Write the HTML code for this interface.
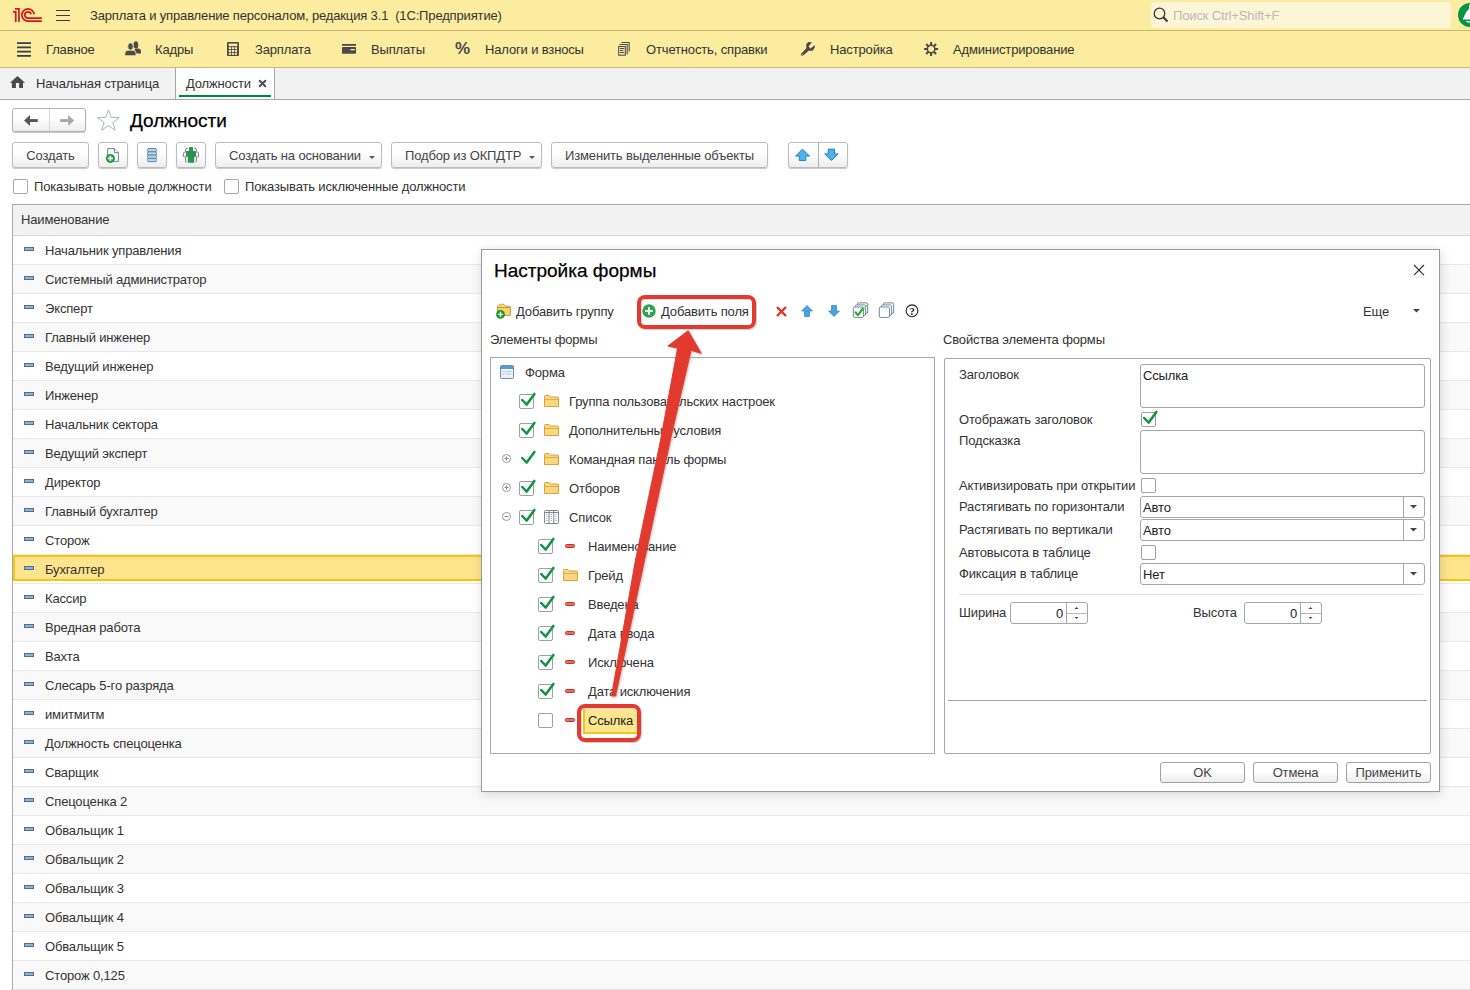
<!DOCTYPE html><html><head><meta charset="utf-8"><style>
*{box-sizing:border-box;margin:0;padding:0}
html,body{width:1470px;height:990px;overflow:hidden;background:#fff}
body{font-family:"Liberation Sans",sans-serif;font-size:13px;color:#333;position:relative;line-height:15px;letter-spacing:-0.15px}
.a{position:absolute;white-space:nowrap}
svg{position:absolute;overflow:visible}
#hdr{position:absolute;left:0;top:0;width:1470px;height:31px;background:#fbeca0;border-bottom:1px solid #c8b86e}
#menu{position:absolute;left:0;top:31px;width:1470px;height:37px;background:#fbeca0;border-bottom:1px solid #cbbb72}
#tabs{position:absolute;left:0;top:68px;width:1470px;height:32px;background:#f2f2f2;border-bottom:1px solid #a8a8a8}
.btn{position:absolute;height:26px;border:1px solid #bcbcbc;border-radius:3px;background:linear-gradient(#fff 40%,#ededed);box-shadow:0 1px 1px rgba(0,0,0,.22);text-align:center;line-height:25px;color:#444}
.cb{position:absolute;width:15px;height:15px;border:1px solid #a8a8a8;border-radius:2px;background:#fff}
.row{position:absolute;left:13px;width:1457px;height:29px;border-bottom:1px solid #e8e8e8}
.row.g{background:#f9f9f9}
.row .ic{position:absolute;left:11px;top:11px;width:10px;height:4px;background:#8db4d8;border:1px solid #4f6f8c}
.row .t{position:absolute;left:32px;top:7px}
</style></head><body>
<div id="hdr">
<svg style="left:0;top:0" width="50" height="30" viewBox="0 0 50 30">
<g fill="none" stroke="#d9141b" stroke-width="1.7">
<path d="M12.9 11.85 H15.75 V21.9 M14.9 8.9 H18.95 V21.9"/>
<path d="M34.1 14.4 A6.1 6.1 0 1 0 28 21.1 H41.8"/>
<path d="M31.1 14.4 A3.15 3.15 0 1 0 28 18.15 H41.8"/>
</g></svg>
<svg style="left:56px;top:9px" width="14" height="12"><path d="M0 1.5H14M0 6.5H14M0 11.5H14" stroke="#3b3b3b" stroke-width="1.2"/></svg>
<div class="a" style="left:90px;top:8px">Зарплата и управление персоналом, редакция 3.1&nbsp; (1С:Предприятие)</div>
<div class="a" style="left:1151px;top:2px;width:300px;height:26px;background:#fdf6d6;border-radius:3px"></div>
<svg style="left:1153px;top:7px" width="16" height="16"><circle cx="6.5" cy="6.5" r="5.3" fill="none" stroke="#333" stroke-width="1.3"/><path d="M10.5 10.5 L14.5 14.5" stroke="#333" stroke-width="2"/></svg>
<div class="a" style="left:1173px;top:8px;color:#b9b9b9">Поиск Ctrl+Shift+F</div>
<svg style="left:0;top:0" width="1470" height="30"><circle cx="1470" cy="14.9" r="12" fill="#069544"/><path d="M1462.8 19.6 Q1464.6 14.5 1467 11 L1468.8 9.5 L1469.3 4.6 H1472 V19.6Z" fill="#fff"/><path d="M1466.5 21.2 Q1469 22.4 1472 22" stroke="#fff" stroke-width="1.2" fill="none"/></svg>
</div>
<div id="menu">
<div class="a" style="left:46px;top:11px">Главное</div>
<div class="a" style="left:155px;top:11px">Кадры</div>
<div class="a" style="left:255px;top:11px">Зарплата</div>
<div class="a" style="left:371px;top:11px">Выплаты</div>
<div class="a" style="left:485px;top:11px">Налоги и взносы</div>
<div class="a" style="left:646px;top:11px">Отчетность, справки</div>
<div class="a" style="left:830px;top:11px">Настройка</div>
<div class="a" style="left:953px;top:11px">Администрирование</div>
<div class="a" style="left:455px;top:9px;font-size:17px;line-height:17px;font-weight:bold;color:#4a4a4a">%</div>
</div>
<svg style="left:0;top:0" width="1470" height="100"><path d="M17 43.2H31M17 47.4H31M17 51.6H31M17 55.8H31" stroke="#3d3d48" stroke-width="1.7"/><ellipse cx="135.9" cy="44.9" rx="2.4" ry="3.7" fill="#4a4a4a"/><path d="M134.3 53.6 V50.8 Q134.6 48.7 137 48.6 H138.5 Q141 48.8 141 51 V53.6Z" fill="#4a4a4a"/><ellipse cx="130.5" cy="46.6" rx="2.8" ry="3.8" fill="#4a4a4a" stroke="#fbeca0" stroke-width="0.9"/><path d="M124.8 55.8 V53 Q125 50.4 128 50.2 H133 Q136 50.4 136 53 V55.8Z" fill="#4a4a4a" stroke="#fbeca0" stroke-width="0.9"/><rect x="227" y="42" width="12" height="14" rx="1" fill="#4a4a4a"/><rect x="228.6" y="43.6" width="8.8" height="2.6" fill="#fbeca0"/><rect x="228.8" y="47.2" width="2.2" height="2" fill="#fbeca0"/><rect x="228.8" y="50.0" width="2.2" height="2" fill="#fbeca0"/><rect x="228.8" y="52.8" width="2.2" height="2" fill="#fbeca0"/><rect x="231.8" y="47.2" width="2.2" height="2" fill="#fbeca0"/><rect x="231.8" y="50.0" width="2.2" height="2" fill="#fbeca0"/><rect x="231.8" y="52.8" width="2.2" height="2" fill="#fbeca0"/><rect x="234.8" y="47.2" width="2.2" height="2" fill="#fbeca0"/><rect x="234.8" y="50.0" width="2.2" height="2" fill="#fbeca0"/><rect x="234.8" y="52.8" width="2.2" height="2" fill="#fbeca0"/><rect x="342" y="44" width="14" height="1.8" fill="#4a4a4a"/><rect x="342" y="47" width="14" height="6.8" rx="0.8" fill="#4a4a4a"/><rect x="350.6" y="49" width="4.2" height="1.3" fill="#fbeca0"/><g fill="none" stroke="#4a4a4a" stroke-width="1.05"><rect x="618.7" y="46.5" width="6.6" height="8.7"/><path d="M619.5 44.4H627.2V54.4M621.5 42.4H629.2V51.6"/><path d="M620.3 48.5H623.8M620.3 50.5H622.9M620.3 52.5H623.8" stroke-linecap="round"/></g><path d="M806.2 44.3 L808.3 42.1 L811.9 42.2 L808.6 46.4 L810.5 48.5 L814.5 45.2 L815 47 L812.7 50.7 L808.6 50.8 L803.2 55.6 Q801.5 56.2 800.7 54.2 L806.3 48.3Z" fill="#4a4a4a"/><circle cx="802.6" cy="54.5" r="0.6" fill="#fbeca0"/><g transform="translate(931.1 49)"><circle r="3.75" fill="none" stroke="#4a4a4a" stroke-width="1.5"/><rect x="-1" y="-7" width="2" height="3.4" fill="#4a4a4a" transform="rotate(0)"/><rect x="-1" y="-7" width="2" height="3.4" fill="#4a4a4a" transform="rotate(45)"/><rect x="-1" y="-7" width="2" height="3.4" fill="#4a4a4a" transform="rotate(90)"/><rect x="-1" y="-7" width="2" height="3.4" fill="#4a4a4a" transform="rotate(135)"/><rect x="-1" y="-7" width="2" height="3.4" fill="#4a4a4a" transform="rotate(180)"/><rect x="-1" y="-7" width="2" height="3.4" fill="#4a4a4a" transform="rotate(225)"/><rect x="-1" y="-7" width="2" height="3.4" fill="#4a4a4a" transform="rotate(270)"/><rect x="-1" y="-7" width="2" height="3.4" fill="#4a4a4a" transform="rotate(315)"/></g></svg>
<div id="tabs"></div>
<div class="a" style="left:175px;top:68px;width:100px;height:31px;background:#fff;border-left:1px solid #a8a8a8;border-right:1px solid #a8a8a8"></div>
<svg style="left:0;top:0" width="300" height="100"><path d="M17.5 76 L25 82.7 H23 V88 H19.1 V83 H15.9 V88 H11.9 V82.7 H10Z" fill="#4a4a4a"/><path d="M259.7 80.7L265.3 86.3M265.3 80.7L259.7 86.3" stroke="#4d4d4d" stroke-width="2" stroke-linecap="round"/><rect x="179" y="95" width="92" height="2" fill="#00893a"/></svg>
<div class="a" style="left:36px;top:76px">Начальная страница</div>
<div class="a" style="left:186px;top:76px">Должности</div>
<div class="btn" style="left:12px;top:108px;width:74px;height:24px;border-color:#b0b0b0"></div>
<div class="a" style="left:49px;top:109px;width:1px;height:22px;background:#d9d9d9"></div>
<svg style="left:0;top:0" width="130" height="140"><path d="M24 120.5 L30 115 V126Z" fill="#555"/><rect x="29.5" y="119.1" width="8.3" height="2.9" fill="#555"/><path d="M74.1 120.5 L68.1 115 V126Z" fill="#a6a6a6"/><rect x="60.2" y="119.1" width="8.4" height="2.9" fill="#a6a6a6"/><path d="M108.4 109.8 L111.1 117.4 L119.3 117.6 L112.8 122.5 L115.2 130.2 L108.4 125.6 L101.6 130.2 L104 122.5 L97.5 117.6 L105.7 117.4Z" fill="none" stroke="#aab4be" stroke-width="1"/></svg>
<div class="a" style="left:130px;top:110px;font-size:19px;line-height:22px;color:#000;-webkit-text-stroke:0.25px #000;letter-spacing:0">Должности</div>
<div class="btn" style="left:12px;top:142px;width:77px">Создать</div>
<div class="btn" style="left:98px;top:142px;width:30px"></div>
<div class="btn" style="left:137px;top:142px;width:30px"></div>
<div class="btn" style="left:176px;top:142px;width:30px"></div>
<svg style="left:0;top:0" width="210" height="170"><path d="M107.6 148.6H114.4L118.4 152.6V161.4H107.6Z" fill="#fff" stroke="#6e8296" stroke-width="1"/><path d="M114.4 148.6V152.6H118.4" fill="#fff" stroke="#6e8296" stroke-width="1"/><circle cx="110.4" cy="158.4" r="4.5" fill="#1d9a3a"/><path d="M110.4 155.8V161M107.8 158.4H113" stroke="#fff" stroke-width="1.6"/><rect x="147.5" y="148.5" width="9" height="3.3" rx="1.2" fill="#b9d3ea" stroke="#5e86aa" stroke-width="1"/><rect x="147.5" y="151.8" width="9" height="3.3" rx="1.2" fill="#b9d3ea" stroke="#5e86aa" stroke-width="1"/><rect x="147.5" y="155.1" width="9" height="3.3" rx="1.2" fill="#b9d3ea" stroke="#5e86aa" stroke-width="1"/><rect x="147.5" y="158.4" width="9" height="3.3" rx="1.2" fill="#b9d3ea" stroke="#5e86aa" stroke-width="1"/><g fill="none" stroke="#7a7a7a" stroke-width="1"><path d="M187.8 148.4H187.1Q185.6 148.4 185.6 150V151.3M186.2 152H184.9Q183.4 152 183.4 153.6V156.2Q183.4 156.8 184.2 156.8H185.6M185.6 157V161.6Q185.6 162.2 186.4 162.2"/><path d="M194.2 148.4H194.9Q196.4 148.4 196.4 150V151.3M195.8 152H197.1Q198.6 152 198.6 153.6V156.2Q198.6 156.8 197.8 156.8H196.4M196.4 157V161.6Q196.4 162.2 195.6 162.2"/></g><path d="M189 147.6Q189 147 189.6 147H192.4Q193 147 193 147.6V150.9H195.4Q196 150.9 196 151.5V156.7H194.2V162.3Q194.2 162.8 193.6 162.8H188.4Q187.8 162.8 187.8 162.3V156.7H186V151.5Q186 150.9 186.6 150.9H189Z" fill="#2a9350"/></svg>
<div class="btn" style="left:215px;top:142px;width:167px;text-align:left;padding-left:13px">Создать на основании</div>
<svg style="left:369px;top:156px" width="6" height="3"><path d="M0 0H6L3 3Z" fill="#555"/></svg>
<div class="btn" style="left:391px;top:142px;width:151px;text-align:left;padding-left:13px">Подбор из ОКПДТР</div>
<svg style="left:529px;top:156px" width="6" height="3"><path d="M0 0H6L3 3Z" fill="#555"/></svg>
<div class="btn" style="left:551px;top:142px;width:217px">Изменить выделенные объекты</div>
<div class="btn" style="left:788px;top:142px;width:60px"></div>
<div class="a" style="left:818px;top:143px;width:1px;height:24px;background:#b0b0b0"></div>
<svg style="left:0;top:0" width="860" height="170"><path d="M802.5 149.1L809.5 156.1H805.8V160.5H799.3V156.1H795.6Z" fill="#4bb3ee" stroke="#1f78b4" stroke-width="0.9" stroke-linejoin="round"/><path d="M831.5 160.5L838.2 153.9H834.5V149.1H828.2V153.9H824.7Z" fill="#4bb3ee" stroke="#1f78b4" stroke-width="0.9" stroke-linejoin="round"/></svg>
<div class="cb" style="left:13px;top:179px"></div>
<div class="a" style="left:34px;top:179px">Показывать новые должности</div>
<div class="cb" style="left:224px;top:179px"></div>
<div class="a" style="left:245px;top:179px">Показывать исключенные должности</div>
<div class="a" style="left:12px;top:204px;width:1458px;height:786px;border-left:1px solid #a8a8a8;border-top:1px solid #a8a8a8"></div>
<div class="a" style="left:13px;top:205px;width:1457px;height:31px;background:#f2f2f2;border-bottom:1px solid #d9d9d9"></div>
<div class="a" style="left:21px;top:212px">Наименование</div>
<div class="row" style="top:236px"><div class="ic"></div><div class="t">Начальник управления</div></div>
<div class="row g" style="top:265px"><div class="ic"></div><div class="t">Системный администратор</div></div>
<div class="row" style="top:294px"><div class="ic"></div><div class="t">Эксперт</div></div>
<div class="row g" style="top:323px"><div class="ic"></div><div class="t">Главный инженер</div></div>
<div class="row" style="top:352px"><div class="ic"></div><div class="t">Ведущий инженер</div></div>
<div class="row g" style="top:381px"><div class="ic"></div><div class="t">Инженер</div></div>
<div class="row" style="top:410px"><div class="ic"></div><div class="t">Начальник сектора</div></div>
<div class="row g" style="top:439px"><div class="ic"></div><div class="t">Ведущий эксперт</div></div>
<div class="row" style="top:468px"><div class="ic"></div><div class="t">Директор</div></div>
<div class="row g" style="top:497px"><div class="ic"></div><div class="t">Главный бухгалтер</div></div>
<div class="row" style="top:526px"><div class="ic"></div><div class="t">Сторож</div></div>
<div class="row" style="top:555px"><div class="a" style="left:0;top:0;width:1457px;height:26px;border:2px solid #f6c414;border-right:none;background:#fde48d"></div><div class="ic"></div><div class="t">Бухгалтер</div></div>
<div class="row" style="top:584px"><div class="ic"></div><div class="t">Кассир</div></div>
<div class="row g" style="top:613px"><div class="ic"></div><div class="t">Вредная работа</div></div>
<div class="row" style="top:642px"><div class="ic"></div><div class="t">Вахта</div></div>
<div class="row g" style="top:671px"><div class="ic"></div><div class="t">Слесарь 5-го разряда</div></div>
<div class="row" style="top:700px"><div class="ic"></div><div class="t">имитмитм</div></div>
<div class="row g" style="top:729px"><div class="ic"></div><div class="t">Должность спецоценка</div></div>
<div class="row" style="top:758px"><div class="ic"></div><div class="t">Сварщик</div></div>
<div class="row g" style="top:787px"><div class="ic"></div><div class="t">Спецоценка 2</div></div>
<div class="row" style="top:816px"><div class="ic"></div><div class="t">Обвальщик 1</div></div>
<div class="row g" style="top:845px"><div class="ic"></div><div class="t">Обвальщик 2</div></div>
<div class="row" style="top:874px"><div class="ic"></div><div class="t">Обвальщик 3</div></div>
<div class="row g" style="top:903px"><div class="ic"></div><div class="t">Обвальщик 4</div></div>
<div class="row" style="top:932px"><div class="ic"></div><div class="t">Обвальщик 5</div></div>
<div class="row g" style="top:961px"><div class="ic"></div><div class="t">Сторож 0,125</div></div>
<div class="a" style="left:481px;top:249px;width:959px;height:543px;background:#fff;border:1px solid #9a9a9a;box-shadow:1px 2px 10px rgba(0,0,0,.14)"></div>
<div class="a" style="left:494px;top:260px;font-size:19px;line-height:22px;color:#000;-webkit-text-stroke:0.25px #000;letter-spacing:0">Настройка формы</div>
<svg style="left:1413px;top:264px" width="12" height="12"><path d="M1 1L11 11.2M11 1L1 11.2" stroke="#333" stroke-width="1.2"/></svg>
<svg style="left:0;top:0" width="930" height="330"><path d="M497.6 315.4V306.2L499.6 304.3H503.8L505.4 306.2H509.6Q510.4 306.2 510.4 307V315.4Z" fill="#f7d46e" stroke="#cb8b35" stroke-width="0.9"/><path d="M497.8 307.6H510.2" stroke="#cb8b35" stroke-width="0.9"/><path d="M498.3 305.3L499.8 304.8H503.5L504.5 306.4" fill="#fde35a"/><circle cx="500.5" cy="314.4" r="4.4" fill="#17992a"/><path d="M500.5 311.8V317M497.9 314.4H503.1" stroke="#fff" stroke-width="1.4"/></svg>
<div class="a" style="left:516px;top:304px">Добавить группу</div>
<svg style="left:642px;top:304px" width="14" height="14" viewBox="0 0 14 14"><circle cx="7" cy="7" r="6.7" fill="#2aa552"/><path d="M7 3.2V10.8M3.2 7H10.8" stroke="#fff" stroke-width="2"/></svg>
<div class="a" style="left:661px;top:304px">Добавить поля</div>
<svg style="left:776px;top:306px" width="11" height="11"><path d="M1 1L10 10M10 1L1 10" stroke="#e0312b" stroke-width="2.4"/></svg>
<svg style="left:801px;top:305px" width="12" height="12" viewBox="0 0 12 12"><path d="M6 0.5 L11.5 6 H8.5 V11.5 H3.5 V6 H0.5Z" fill="#4aa3e0" stroke="#2f86c6" stroke-width="0.7"/></svg>
<svg style="left:828px;top:305px" width="12" height="12" viewBox="0 0 12 12"><path d="M6 11.5 L11.5 6 H8.5 V0.5 H3.5 V6 H0.5Z" fill="#4aa3e0" stroke="#2f86c6" stroke-width="0.7"/></svg>
<svg style="left:0;top:0" width="930" height="330"><rect x="857.4" y="302.9" width="10.3" height="10.4" rx="1.3" fill="#fff" stroke="#5b7a95" stroke-width="0.9"/><rect x="855.3499999999999" y="304.95" width="10.3" height="10.4" rx="1.3" fill="#fff" stroke="#5b7a95" stroke-width="0.9"/><rect x="853.3" y="307" width="10.3" height="10.4" rx="1.3" fill="#fff" stroke="#5b7a95" stroke-width="0.9"/><path d="M855.5 312.3L858 315.2L862.6 309" fill="none" stroke="#3aa82a" stroke-width="2.2" stroke-linecap="round" stroke-linejoin="round"/><path d="M864.5 308.5L866.5 305.2M866.5 306.5L868 304" stroke="#7cc46a" stroke-width="1.2"/></svg>
<svg style="left:0;top:0" width="930" height="330"><rect x="883.4" y="302.9" width="10.3" height="10.4" rx="1.3" fill="#fff" stroke="#5b7a95" stroke-width="0.9"/><rect x="881.3499999999999" y="304.95" width="10.3" height="10.4" rx="1.3" fill="#fff" stroke="#5b7a95" stroke-width="0.9"/><rect x="879.3" y="307" width="10.3" height="10.4" rx="1.3" fill="#fff" stroke="#5b7a95" stroke-width="0.9"/></svg>
<svg style="left:0;top:0" width="930" height="330"><circle cx="912" cy="310.8" r="5.9" fill="#fff" stroke="#222" stroke-width="1.1"/><text x="912" y="314.6" font-family="Liberation Serif" font-weight="bold" font-size="10.5" text-anchor="middle" fill="#111">?</text></svg>
<div class="a" style="left:1363px;top:304px">Еще</div>
<svg style="left:1413px;top:309px" width="7" height="4"><path d="M0 0H7L3.5 3.5Z" fill="#444"/></svg>
<div class="a" style="left:490px;top:332px">Элементы формы</div>
<div class="a" style="left:943px;top:332px">Свойства элемента формы</div>
<div class="a" style="left:490px;top:357px;width:445px;height:397px;border:1px solid #a8a8a8;background:#fff"></div>
<svg style="left:500px;top:365px" width="14" height="14" viewBox="0 0 14 14"><rect x="0.5" y="0.5" width="13" height="13" rx="1" fill="#eef2f6" stroke="#6b8eb4"/><rect x="1" y="1" width="12" height="3" fill="#5b9bd5"/><path d="M2.5 6.5H5M6.5 6.5H11.5M2.5 9H5M6.5 9H11.5" stroke="#b4c2d0"/></svg>
<div class="a" style="left:525px;top:365px">Форма</div>
<div class="cb" style="left:519px;top:394px;border-color:#a0a0a0"></div><svg style="left:519px;top:387px" width="18" height="22" viewBox="0 0 18 22"><path d="M3.2 13 L7.7 17.6 L15.4 6.9" fill="none" stroke="#119442" stroke-width="2.5" stroke-linecap="round" stroke-linejoin="round"/></svg>
<svg style="left:544px;top:395px" width="15" height="12" viewBox="0 0 15 12"><path d="M0.5 1.5 Q0.5 0.5 1.5 0.5 H5 L6.5 2 H13.5 Q14.5 2 14.5 3 V11.5 H0.5Z" fill="#f9d77e" stroke="#d9a23a"/><path d="M1 4.5 H14" stroke="#e0ad48"/></svg>
<div class="a" style="left:569px;top:394px">Группа пользовательских настроек</div>
<div class="cb" style="left:519px;top:423px;border-color:#a0a0a0"></div><svg style="left:519px;top:416px" width="18" height="22" viewBox="0 0 18 22"><path d="M3.2 13 L7.7 17.6 L15.4 6.9" fill="none" stroke="#119442" stroke-width="2.5" stroke-linecap="round" stroke-linejoin="round"/></svg>
<svg style="left:544px;top:424px" width="15" height="12" viewBox="0 0 15 12"><path d="M0.5 1.5 Q0.5 0.5 1.5 0.5 H5 L6.5 2 H13.5 Q14.5 2 14.5 3 V11.5 H0.5Z" fill="#f9d77e" stroke="#d9a23a"/><path d="M1 4.5 H14" stroke="#e0ad48"/></svg>
<div class="a" style="left:569px;top:423px">Дополнительные условия</div>
<svg style="left:502px;top:454px" width="9" height="9" viewBox="0 0 9 9"><circle cx="4.5" cy="4.5" r="4" fill="#fff" stroke="#999" stroke-width="1"/><path d="M2.5 4.5H6.5M4.5 2.5V6.5" stroke="#888" stroke-width="1"/></svg>
<svg style="left:519px;top:445px" width="18" height="22" viewBox="0 0 18 22"><path d="M3.2 13 L7.7 17.6 L15.4 6.9" fill="none" stroke="#119442" stroke-width="2.5" stroke-linecap="round" stroke-linejoin="round"/></svg>
<svg style="left:544px;top:453px" width="15" height="12" viewBox="0 0 15 12"><path d="M0.5 1.5 Q0.5 0.5 1.5 0.5 H5 L6.5 2 H13.5 Q14.5 2 14.5 3 V11.5 H0.5Z" fill="#f9d77e" stroke="#d9a23a"/><path d="M1 4.5 H14" stroke="#e0ad48"/></svg>
<div class="a" style="left:569px;top:452px">Командная панель формы</div>
<svg style="left:502px;top:483px" width="9" height="9" viewBox="0 0 9 9"><circle cx="4.5" cy="4.5" r="4" fill="#fff" stroke="#999" stroke-width="1"/><path d="M2.5 4.5H6.5M4.5 2.5V6.5" stroke="#888" stroke-width="1"/></svg>
<div class="cb" style="left:519px;top:481px;border-color:#a0a0a0"></div><svg style="left:519px;top:474px" width="18" height="22" viewBox="0 0 18 22"><path d="M3.2 13 L7.7 17.6 L15.4 6.9" fill="none" stroke="#119442" stroke-width="2.5" stroke-linecap="round" stroke-linejoin="round"/></svg>
<svg style="left:544px;top:482px" width="15" height="12" viewBox="0 0 15 12"><path d="M0.5 1.5 Q0.5 0.5 1.5 0.5 H5 L6.5 2 H13.5 Q14.5 2 14.5 3 V11.5 H0.5Z" fill="#f9d77e" stroke="#d9a23a"/><path d="M1 4.5 H14" stroke="#e0ad48"/></svg>
<div class="a" style="left:569px;top:481px">Отборов</div>
<svg style="left:502px;top:512px" width="9" height="9" viewBox="0 0 9 9"><circle cx="4.5" cy="4.5" r="4" fill="#fff" stroke="#999" stroke-width="1"/><path d="M2.5 4.5H6.5" stroke="#888" stroke-width="1"/></svg>
<div class="cb" style="left:519px;top:510px;border-color:#a0a0a0"></div><svg style="left:519px;top:503px" width="18" height="22" viewBox="0 0 18 22"><path d="M3.2 13 L7.7 17.6 L15.4 6.9" fill="none" stroke="#119442" stroke-width="2.5" stroke-linecap="round" stroke-linejoin="round"/></svg>
<svg style="left:544px;top:510px" width="15" height="14" viewBox="0 0 15 14"><rect x="0.5" y="0.5" width="14" height="13" rx="1" fill="#fff" stroke="#7b8793"/><path d="M0.5 2.5H14.5M5 0.5V13.5M9.8 0.5V13.5" stroke="#7b8793" stroke-width="1"/><rect x="2.3" y="4" width="1" height="1" fill="#8d98a2"/><rect x="2.3" y="6" width="1" height="1" fill="#8d98a2"/><rect x="2.3" y="8" width="1" height="1" fill="#8d98a2"/><rect x="2.3" y="10" width="1" height="1" fill="#8d98a2"/><rect x="6.8" y="4" width="1" height="1" fill="#8d98a2"/><rect x="6.8" y="6" width="1" height="1" fill="#8d98a2"/><rect x="6.8" y="8" width="1" height="1" fill="#8d98a2"/><rect x="6.8" y="10" width="1" height="1" fill="#8d98a2"/><rect x="11.5" y="4" width="1" height="1" fill="#8d98a2"/><rect x="11.5" y="6" width="1" height="1" fill="#8d98a2"/><rect x="11.5" y="8" width="1" height="1" fill="#8d98a2"/><rect x="11.5" y="10" width="1" height="1" fill="#8d98a2"/></svg>
<div class="a" style="left:569px;top:510px">Список</div>
<div class="cb" style="left:538px;top:539px;border-color:#a0a0a0"></div><svg style="left:538px;top:532px" width="18" height="22" viewBox="0 0 18 22"><path d="M3.2 13 L7.7 17.6 L15.4 6.9" fill="none" stroke="#119442" stroke-width="2.5" stroke-linecap="round" stroke-linejoin="round"/></svg>
<div class="a" style="left:565px;top:544px;width:10px;height:4px;background:#ef6a5c;border:1px solid #c9342a;border-radius:1.5px"></div>
<div class="a" style="left:588px;top:539px">Наименование</div>
<div class="cb" style="left:538px;top:568px;border-color:#a0a0a0"></div><svg style="left:538px;top:561px" width="18" height="22" viewBox="0 0 18 22"><path d="M3.2 13 L7.7 17.6 L15.4 6.9" fill="none" stroke="#119442" stroke-width="2.5" stroke-linecap="round" stroke-linejoin="round"/></svg>
<svg style="left:563px;top:569px" width="15" height="12" viewBox="0 0 15 12"><path d="M0.5 1.5 Q0.5 0.5 1.5 0.5 H5 L6.5 2 H13.5 Q14.5 2 14.5 3 V11.5 H0.5Z" fill="#f9d77e" stroke="#d9a23a"/><path d="M1 4.5 H14" stroke="#e0ad48"/></svg>
<div class="a" style="left:588px;top:568px">Грейд</div>
<div class="cb" style="left:538px;top:597px;border-color:#a0a0a0"></div><svg style="left:538px;top:590px" width="18" height="22" viewBox="0 0 18 22"><path d="M3.2 13 L7.7 17.6 L15.4 6.9" fill="none" stroke="#119442" stroke-width="2.5" stroke-linecap="round" stroke-linejoin="round"/></svg>
<div class="a" style="left:565px;top:602px;width:10px;height:4px;background:#ef6a5c;border:1px solid #c9342a;border-radius:1.5px"></div>
<div class="a" style="left:588px;top:597px">Введена</div>
<div class="cb" style="left:538px;top:626px;border-color:#a0a0a0"></div><svg style="left:538px;top:619px" width="18" height="22" viewBox="0 0 18 22"><path d="M3.2 13 L7.7 17.6 L15.4 6.9" fill="none" stroke="#119442" stroke-width="2.5" stroke-linecap="round" stroke-linejoin="round"/></svg>
<div class="a" style="left:565px;top:631px;width:10px;height:4px;background:#ef6a5c;border:1px solid #c9342a;border-radius:1.5px"></div>
<div class="a" style="left:588px;top:626px">Дата ввода</div>
<div class="cb" style="left:538px;top:655px;border-color:#a0a0a0"></div><svg style="left:538px;top:648px" width="18" height="22" viewBox="0 0 18 22"><path d="M3.2 13 L7.7 17.6 L15.4 6.9" fill="none" stroke="#119442" stroke-width="2.5" stroke-linecap="round" stroke-linejoin="round"/></svg>
<div class="a" style="left:565px;top:660px;width:10px;height:4px;background:#ef6a5c;border:1px solid #c9342a;border-radius:1.5px"></div>
<div class="a" style="left:588px;top:655px">Исключена</div>
<div class="cb" style="left:538px;top:684px;border-color:#a0a0a0"></div><svg style="left:538px;top:677px" width="18" height="22" viewBox="0 0 18 22"><path d="M3.2 13 L7.7 17.6 L15.4 6.9" fill="none" stroke="#119442" stroke-width="2.5" stroke-linecap="round" stroke-linejoin="round"/></svg>
<div class="a" style="left:565px;top:689px;width:10px;height:4px;background:#ef6a5c;border:1px solid #c9342a;border-radius:1.5px"></div>
<div class="a" style="left:588px;top:684px">Дата исключения</div>
<div class="cb" style="left:538px;top:713px;border-color:#a0a0a0"></div>
<div class="a" style="left:565px;top:718px;width:10px;height:4px;background:#ef6a5c;border:1px solid #c9342a;border-radius:1.5px"></div>
<div class="a" style="left:583px;top:709px;width:54px;height:25px;background:#fde68e;border-left:2px solid #f5c518;border-bottom:2px solid #f5c518"></div>
<div class="a" style="left:588px;top:713px;color:#222">Ссылка</div>
<div class="a" style="left:944px;top:358px;width:487px;height:396px;border:1px solid #a8a8a8;border-radius:2px;background:#fff"></div>
<div class="a" style="left:948px;top:700px;width:479px;height:1px;background:#a0a0a0"></div>
<div class="a" style="left:959px;top:367px">Заголовок</div>
<div class="a" style="left:959px;top:412px">Отображать заголовок</div>
<div class="a" style="left:959px;top:433px">Подсказка</div>
<div class="a" style="left:959px;top:478px">Активизировать при открытии</div>
<div class="a" style="left:959px;top:499px">Растягивать по горизонтали</div>
<div class="a" style="left:959px;top:522px">Растягивать по вертикали</div>
<div class="a" style="left:959px;top:545px">Автовысота в таблице</div>
<div class="a" style="left:959px;top:566px">Фиксация в таблице</div>
<div class="a" style="left:1140px;top:364px;width:285px;height:44px;border:1px solid #a6a6a6;border-radius:3px;background:#fff"></div>
<div class="a" style="left:1143px;top:368px;color:#222">Ссылка</div>
<div class="cb" style="left:1141px;top:412px;border-color:#a0a0a0"></div><svg style="left:1141px;top:405px" width="18" height="22" viewBox="0 0 18 22"><path d="M3.2 13 L7.7 17.6 L15.4 6.9" fill="none" stroke="#119442" stroke-width="2.5" stroke-linecap="round" stroke-linejoin="round"/></svg>
<div class="a" style="left:1140px;top:430px;width:285px;height:44px;border:1px solid #a6a6a6;border-radius:3px;background:#fff"></div>
<div class="cb" style="left:1141px;top:478px;border-color:#a0a0a0"></div>
<div class="cb" style="left:1141px;top:545px;border-color:#a0a0a0"></div>
<div class="a" style="left:1140px;top:496px;width:285px;height:22px;border:1px solid #a6a6a6;border-radius:3px;background:#fff"></div><div class="a" style="left:1403px;top:497px;width:1px;height:20px;background:#a6a6a6"></div><svg style="left:1410px;top:505px" width="7" height="4"><path d="M0 0H7L3.5 3.5Z" fill="#444"/></svg><div class="a" style="left:1143px;top:500px;color:#222">Авто</div>
<div class="a" style="left:1140px;top:519px;width:285px;height:22px;border:1px solid #a6a6a6;border-radius:3px;background:#fff"></div><div class="a" style="left:1403px;top:520px;width:1px;height:20px;background:#a6a6a6"></div><svg style="left:1410px;top:528px" width="7" height="4"><path d="M0 0H7L3.5 3.5Z" fill="#444"/></svg><div class="a" style="left:1143px;top:523px;color:#222">Авто</div>
<div class="a" style="left:1140px;top:563px;width:285px;height:22px;border:1px solid #a6a6a6;border-radius:3px;background:#fff"></div><div class="a" style="left:1403px;top:564px;width:1px;height:20px;background:#a6a6a6"></div><svg style="left:1410px;top:572px" width="7" height="4"><path d="M0 0H7L3.5 3.5Z" fill="#444"/></svg><div class="a" style="left:1143px;top:567px;color:#222">Нет</div>
<div class="a" style="left:959px;top:594px;width:464px;height:1px;background:#e2e2e2"></div>
<div class="a" style="left:959px;top:605px">Ширина</div>
<div class="a" style="left:1010px;top:602px;width:78px;height:22px;border:1px solid #a6a6a6;border-radius:3px;background:#fff"></div><div class="a" style="left:1066px;top:603px;width:1px;height:20px;background:#a6a6a6"></div><div class="a" style="left:1067px;top:613px;width:20px;height:1px;background:#b8b8b8"></div><svg style="left:1074px;top:606px" width="5" height="14"><path d="M0.5 3H4.5L2.5 1Z M0.5 11H4.5L2.5 13Z" fill="#444"/></svg><div class="a" style="left:1056px;top:606px;color:#222">0</div>
<div class="a" style="left:1193px;top:605px">Высота</div>
<div class="a" style="left:1244px;top:602px;width:78px;height:22px;border:1px solid #a6a6a6;border-radius:3px;background:#fff"></div><div class="a" style="left:1300px;top:603px;width:1px;height:20px;background:#a6a6a6"></div><div class="a" style="left:1301px;top:613px;width:20px;height:1px;background:#b8b8b8"></div><svg style="left:1308px;top:606px" width="5" height="14"><path d="M0.5 3H4.5L2.5 1Z M0.5 11H4.5L2.5 13Z" fill="#444"/></svg><div class="a" style="left:1290px;top:606px;color:#222">0</div>
<div class="btn" style="left:1160px;top:762px;width:85px;height:21px;line-height:19px;border-color:#a0a0a0;box-shadow:none">OK</div>
<div class="btn" style="left:1253px;top:762px;width:85px;height:21px;line-height:19px;border-color:#a0a0a0;box-shadow:none">Отмена</div>
<div class="btn" style="left:1346px;top:762px;width:85px;height:21px;line-height:19px;border-color:#a0a0a0;box-shadow:none">Применить</div>
<div class="a" style="left:637px;top:295px;width:119px;height:34px;border:4px solid #e33a2f;border-radius:8px;box-shadow:1px 1px 1px rgba(0,0,0,.2),inset 1px 1px 1px rgba(0,0,0,.15)"></div>
<div class="a" style="left:577px;top:704px;width:64px;height:38px;border:4px solid #e33a2f;border-radius:8px;box-shadow:1px 1px 1px rgba(0,0,0,.2),inset 1px 1px 1px rgba(0,0,0,.15)"></div>
<svg style="left:0;top:0;filter:drop-shadow(1px 1px 1px rgba(0,0,0,.25))" width="1470" height="990"><path d="M611.5 696 L615.5 696 L644.5 560 L670.3 440 L691 350.3 L701.2 353.3 L688.2 330.7 L667.9 346 L677.6 348 L660.6 440 L635.5 560Z" fill="#e33a2f" stroke="#e33a2f" stroke-width="1" stroke-linejoin="round"/></svg>
</body></html>
